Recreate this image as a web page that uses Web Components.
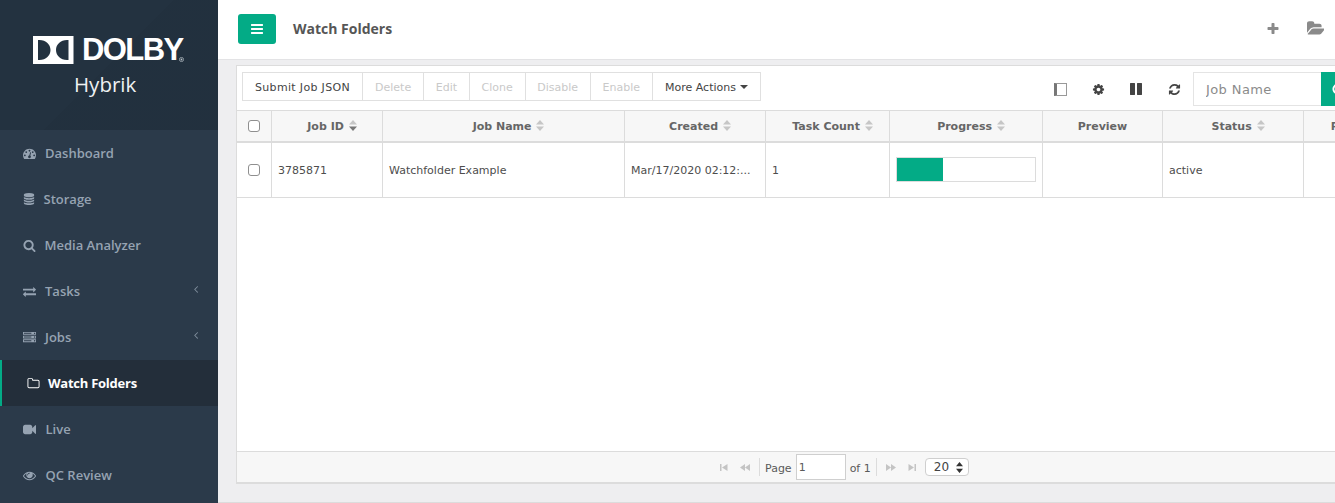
<!DOCTYPE html>
<html lang="en">
<head>
<meta charset="utf-8">
<title>Watch Folders</title>
<style>
html, body { margin: 0; height: 100%; overflow: hidden; background: #fff; }
</style>
</head>
<body>
<hy-app></hy-app>
<script>
'use strict';

(function() {

const GREEN = '#03ab86';

// glyph paths on the usual 1792 grid
const ICONS = {
  dashboard: 'M384 1152q0-53-37.5-90.5t-90.5-37.5-90.5 37.5-37.5 90.5 37.5 90.5 90.5 37.5 90.5-37.5 37.5-90.5zm192-448q0-53-37.5-90.5t-90.5-37.5-90.5 37.5-37.5 90.5 37.5 90.5 90.5 37.5 90.5-37.5 37.5-90.5zm428 481l101-382q6-26-7.5-48.5t-38.5-29.5-48 6.5-30 39.5l-101 382q-60 5-107 43.5t-63 98.5q-20 77 20 146t117 89 146-20 89-117q16-60-6-117t-72-91zm660-33q0-53-37.5-90.5t-90.5-37.5-90.5 37.5-37.5 90.5 37.5 90.5 90.5 37.5 90.5-37.5 37.5-90.5zm-640-640q0-53-37.5-90.5t-90.5-37.5-90.5 37.5-37.5 90.5 37.5 90.5 90.5 37.5 90.5-37.5 37.5-90.5zm448 192q0-53-37.5-90.5t-90.5-37.5-90.5 37.5-37.5 90.5 37.5 90.5 90.5 37.5 90.5-37.5 37.5-90.5zm320 448q0 261-141 483-19 29-54 29h-1402q-35 0-54-29-141-221-141-483 0-182 71-348t191-286 286-191 348-71 348 71 286 191 191 286 71 348z',
  database: 'M896 768q237 0 443-43t325-127v170q0 69-103 128t-280 93.5-385 34.5-385-34.5-280-93.5-103-128v-170q119 84 325 127t443 43zm0 768q237 0 443-43t325-127v170q0 69-103 128t-280 93.5-385 34.5-385-34.5-280-93.5-103-128v-170q119 84 325 127t443 43zm0-384q237 0 443-43t325-127v170q0 69-103 128t-280 93.5-385 34.5-385-34.5-280-93.5-103-128v-170q119 84 325 127t443 43zm0-1152q208 0 385 34.5t280 93.5 103 128v128q0 69-103 128t-280 93.5-385 34.5-385-34.5-280-93.5-103-128v-128q0-69 103-128t280-93.5 385-34.5z',
  search: 'M1216 832q0-185-131.5-316.5t-316.5-131.5-316.5 131.5-131.5 316.5 131.5 316.5 316.5 131.5 316.5-131.5 131.5-316.5zm512 832q0 52-38 90t-90 38q-54 0-90-38l-343-342q-179 124-399 124-143 0-273.5-55.5t-225-150-150-225-55.5-273.5 55.5-273.5 150-225 225-150 273.5-55.5 273.5 55.5 225 150 150 225 55.5 273.5q0 220-124 399l343 343q37 37 37 90z',
  exchange: 'M1792 1184v192q0 13-9.5 22.5t-22.5 9.5h-1376v192q0 13-9.5 22.5t-22.5 9.5q-12 0-24-10l-319-320q-9-9-9-22 0-14 9-23l320-320q9-9 23-9 13 0 22.5 9.5t9.5 22.5v192h1376q13 0 22.5 9.5t9.5 22.5zm0-544q0 14-9 23l-320 320q-9 9-23 9-13 0-22.5-9.5t-9.5-22.5v-192h-1376q-13 0-22.5-9.5t-9.5-22.5v-192q0-13 9.5-22.5t22.5-9.5h1376v-192q0-14 9-23t23-9q12 0 24 10l319 319q9 9 9 23z',
  server: 'M128 1408h1024v-128h-1024v128zm0-512h1024v-128h-1024v128zm1568 448q0-40-28-68t-68-28-68 28-28 68 28 68 68 28 68-28 28-68zm-1568-960h1024v-128h-1024v128zm1568 448q0-40-28-68t-68-28-68 28-28 68 28 68 68 28 68-28 28-68zm0-512q0-40-28-68t-68-28-68 28-28 68 28 68 68 28 68-28 28-68zm96 832v384h-1792v-384h1792zm0-512v384h-1792v-384h1792zm0-512v384h-1792v-384h1792z',
  folder: 'M1600 1312v-704q0-40-28-68t-68-28h-704q-40 0-68-28t-28-68v-64q0-40-28-68t-68-28h-320q-40 0-68 28t-28 68v960q0 40 28 68t68 28h1216q40 0 68-28t28-68zm128-704v704q0 92-66 158t-158 66h-1216q-92 0-158-66t-66-158v-960q0-92 66-158t158-66h320q92 0 158 66t66 158v32h672q92 0 158 66t66 158z',
  video: 'M1792 352v1088q0 42-39 59-13 5-25 5-27 0-45-19l-403-403v166q0 119-84.5 203.5t-203.5 84.5h-704q-119 0-203.5-84.5t-84.5-203.5v-704q0-119 84.5-203.5t203.5-84.5h704q119 0 203.5 84.5t84.5 203.5v165l403-402q18-19 45-19 12 0 25 5 39 17 39 59z',
  eye: 'M1664 960q-152-236-381-353 61 104 61 225 0 185-131.5 316.5t-316.5 131.5-316.5-131.5-131.5-316.5q0-121 61-225-229 117-381 353 133 205 333.5 326.5t434.5 121.5 434.5-121.5 333.5-326.5zm-720-384q0-20-14-34t-34-14q-125 0-214.5 89.5t-89.5 214.5q0 20 14 34t34 14 34-14 14-34q0-86 61-147t147-61q20 0 34-14t14-34zm848 384q0 34-20 69-140 230-376.5 368.5t-499.5 138.5-499.5-139-376.5-368q-20-35-20-69t20-69q140-229 376.5-368t499.5-139 499.5 139 376.5 368q20 35 20 69z',
  angle: 'M1203 544q0 13-10 23l-393 393 393 393q10 10 10 23t-10 23l-50 50q-10 10-23 10t-23-10l-466-466q-10-10-10-23t10-23l466-466q10-10 23-10t23 10l50 50q10 10 10 23z',
  plus: 'M1600 736v192q0 40-28 68t-68 28h-416v416q0 40-28 68t-68 28h-192q-40 0-68-28t-28-68v-416h-416q-40 0-68-28t-28-68v-192q0-40 28-68t68-28h416v-416q0-40 28-68t68-28h192q40 0 68 28t28 68v416h416q40 0 68 28t28 68z',
  open: 'M1879 952q0 31-31 66l-336 396q-43 51-120.5 86.5t-143.5 35.5h-1088q-34 0-60.5-13t-26.5-43q0-31 31-66l336-396q43-51 120.5-86.5t143.5-35.5h1088q34 0 60.5 13t26.5 43zm-343-344v160h-832q-94 0-197 47.5t-164 119.5l-337 396-5 6q0-4-.5-12.5t-.5-12.5v-960q0-92 66-158t158-66h320q92 0 158 66t66 158v32h544q92 0 158 66t66 158z',
  bars: 'M1664 1344v128q0 26-19 45t-45 19h-1408q-26 0-45-19t-19-45v-128q0-26 19-45t45-19h1408q26 0 45 19t19 45zm0-512v128q0 26-19 45t-45 19h-1408q-26 0-45-19t-19-45v-128q0-26 19-45t45-19h1408q26 0 45 19t19 45zm0-512v128q0 26-19 45t-45 19h-1408q-26 0-45-19t-19-45v-128q0-26 19-45t45-19h1408q26 0 45 19t19 45z',
  cog: 'M1152 896q0-106-75-181t-181-75-181 75-75 181 75 181 181 75 181-75 75-181zm512-109v222q0 12-8 23t-20 13l-185 28q-19 54-39 91 35 50 107 138 10 12 10 25t-9 23q-27 37-99 108t-94 71q-12 0-26-9l-138-108q-44 23-91 38-16 136-29 186-7 28-36 28h-222q-14 0-24.5-8.5t-11.5-21.5l-28-184q-49-16-90-37l-141 107q-10 9-25 9-14 0-25-11-126-114-165-168-7-10-7-23 0-12 8-23 15-21 51-66.5t54-70.5q-27-50-41-99l-183-27q-13-2-21-12.5t-8-23.5v-222q0-12 8-23t19-13l186-28q14-46 39-92-40-57-107-138-10-12-10-24 0-10 9-23 26-36 98.5-107.5t94.5-71.5q13 0 26 10l138 107q44-23 91-38 16-136 29-186 7-28 36-28h222q14 0 24.5 8.5t11.5 21.5l28 184q49 16 90 37l142-107q9-9 24-9 13 0 25 10 129 119 165 170 7 8 7 22 0 12-8 23-15 21-51 66.5t-54 70.5q26 50 41 98l183 28q13 2 21 12.5t8 23.5z',
  pause: 'M1664 192v1408q0 26-19 45t-45 19h-512q-26 0-45-19t-19-45v-1408q0-26 19-45t45-19h512q26 0 45 19t19 45zm-896 0v1408q0 26-19 45t-45 19h-512q-26 0-45-19t-19-45v-1408q0-26 19-45t45-19h512q26 0 45 19t19 45z',
  refresh: 'M1639 1056q0 5-1 7-64 268-268 434.5t-478 166.5q-146 0-282.5-55t-243.5-157l-129 129q-19 19-45 19t-45-19-19-45v-448q0-26 19-45t45-19h448q26 0 45 19t19 45-19 45l-137 137q71 66 161 102t187 36q134 0 250-65t186-179q11-17 53-117 8-23 30-23h192q13 0 22.5 9.5t9.5 22.5zm25-800v448q0 26-19 45t-45 19h-448q-26 0-45-19t-19-45 19-45l138-138q-148-137-349-137-134 0-250 65t-186 179q-11 17-53 117-8 23-30 23h-199q-13 0-22.5-9.5t-9.5-22.5v-7q65-268 270-434.5t480-166.5q146 0 284 55.5t245 156.5l130-129q19-19 45-19t45 19 19 45z',
};

function icon(name, size) {
  return `<svg width="${size}" height="${size}" viewBox="0 0 1792 1792" fill="currentColor" aria-hidden="true"><path d="${ICONS[name]}"/></svg>`;
}

class HyApp extends HTMLElement {
  constructor() {
    super();
    const root = this.attachShadow({mode: 'open'});
    root.innerHTML = `
<style>
:host {
  display: grid;
  grid-template-columns: 218px 1fr;
  height: 503px;
  overflow: hidden;
}
#main {
  display: flex;
  flex-direction: column;
  min-width: 0;
  overflow: hidden;
  background: #eeeef0;
}
#content {
  flex: 1;
  min-height: 0;
  padding: 5px 0 18px 18px;
  overflow: hidden;
}
#foot { height: 1px; flex: none; background: #dcdcdc; }
</style>
<hy-sidebar></hy-sidebar>
<div id="main">
  <hy-topbar title="Watch Folders"></hy-topbar>
  <div id="content"><hy-jobs-panel></hy-jobs-panel></div>
  <div id="foot"></div>
</div>
`;
  }
}

class HySidebar extends HTMLElement {
  constructor() {
    super();
    const root = this.attachShadow({mode: 'open'});
    root.innerHTML = `
<style>
:host {
  display: flex;
  flex-direction: column;
  background: #2b3a4a;
  overflow: hidden;
}
#logo {
  height: 130px;
  flex: none;
  position: relative;
  background: #233240;
  box-sizing: border-box;
  padding: 36px 0 0 33px;
}
#shade {
  position: absolute;
  inset: 0;
  background: linear-gradient(135deg, transparent 49.8%, #202e3b 50%);
  opacity: 0.4;
}
#mark {
  position: relative;
  display: flex;
  align-items: flex-start;
  height: 29px;
}
#mark svg { flex: none; }
#word {
  margin-left: 8px;
  font: 700 31px/28px "Liberation Sans", sans-serif;
  letter-spacing: -1.6px;
  color: #fff;
}
#reg { margin: 21px 0 0 -4px; }
#name {
  position: relative;
  margin: 5px 0 0 41px;
  font: 400 20.5px/28px "Open Sans", sans-serif;
  color: #eef1f3;
}
</style>
<div id="logo">
  <div id="shade"></div>
  <div id="mark">
    <svg width="41" height="28" viewBox="0 0 41 28"><path fill="#fff" fill-rule="evenodd" d="M0 0h40.500v28H0zM5 4v20h1.500c6.500 0 11-4.500 11-10S13 4 6.500 4zM35.500 4H34c-6.500 0-11 4.500-11 10s4.500 10 11 10h1.500z"/></svg>
    <span id="word">DOLBY</span>
    <svg id="reg" width="5" height="5" viewBox="0 0 5 5" aria-hidden="true"><circle cx="2.500" cy="2.500" r="2.100" fill="none" stroke="#b9c1c8" stroke-width=".7"/><circle cx="2.500" cy="2.500" r=".9" fill="#b9c1c8"/></svg>
  </div>
  <div id="name">Hybrik</div>
</div>
<hy-nav-item icon="dashboard" size="13" gap="9">Dashboard</hy-nav-item>
<hy-nav-item icon="database" size="12" gap="8.500">Storage</hy-nav-item>
<hy-nav-item icon="search" size="13" gap="8.500">Media Analyzer</hy-nav-item>
<hy-nav-item icon="exchange" size="13" gap="9" sub>Tasks</hy-nav-item>
<hy-nav-item icon="server" size="13" gap="9" sub>Jobs</hy-nav-item>
<hy-nav-item icon="folder" size="13" gap="8" active>Watch Folders</hy-nav-item>
<hy-nav-item icon="video" size="13" gap="9.500">Live</hy-nav-item>
<hy-nav-item icon="eye" size="13" gap="9.500">QC Review</hy-nav-item>
`;
  }
}

class HyNavItem extends HTMLElement {
  constructor() {
    super();
    const root = this.attachShadow({mode: 'open'});
    const name = this.getAttribute('icon');
    const size = this.getAttribute('size');
    const gap = this.getAttribute('gap');
    root.innerHTML = `
<style>
:host {
  display: flex;
  align-items: center;
  flex: none;
  height: 46px;
  box-sizing: border-box;
  padding: 0 16px 0 23px;
  color: #96a3b2;
  font: 600 13px/18px "Open Sans", sans-serif;
}
:host([active]) {
  background: #232e3a;
  color: #fff;
  font-weight: 700;
  letter-spacing: -0.25px;
  border-left: 2px solid ${GREEN};
  padding-left: 25px;
}
svg { flex: none; }
#label { margin-left: ${gap}px; }
#more { margin-left: auto; margin-top: -5px; color: #7f8d9c; display: flex; }
</style>
${icon(name, size)}
<span id="label"><slot></slot></span>
${this.hasAttribute('sub') ? `<span id="more">${icon('angle', 12)}</span>` : ''}
`;
  }
}

class HyTopbar extends HTMLElement {
  constructor() {
    super();
    const root = this.attachShadow({mode: 'open'});
    root.innerHTML = `
<style>
:host {
  display: flex;
  align-items: center;
  flex: none;
  height: 60px;
  box-sizing: border-box;
  padding: 0 11px 2px 20px;
  background: #fff;
  border-bottom: 1px solid #e3e3e5;
}
button {
  width: 38px;
  height: 30px;
  padding: 0;
  border: 0;
  border-radius: 3px;
  background: ${GREEN};
  color: #fff;
  display: flex;
  align-items: center;
  justify-content: center;
}
h1 {
  margin: 0 0 0 17px;
  font: 700 14px/20px "Open Sans", sans-serif;
  color: #565656;
}
#tools {
  margin-left: auto;
  display: flex;
  align-items: center;
  gap: 27px;
  color: #8a8a8a;
}
#tools svg { display: block; }
</style>
<button type="button" aria-label="Menu">${icon('bars', 14)}</button>
<h1>${this.getAttribute('title')}</h1>
<div id="tools">${icon('plus', 14)}${icon('open', 17)}</div>
`;
  }
}

class HyJobsPanel extends HTMLElement {
  constructor() {
    super();
    const root = this.attachShadow({mode: 'open'});
    root.innerHTML = `
<style>
:host {
  display: flex;
  flex-direction: column;
  width: 1166px;
  height: 100%;
  box-sizing: border-box;
  background: #fff;
  border: 1px solid #dcdcdc;
  border-right: 0;
  border-bottom: 0;
}
hy-jobs-table { flex: 1; min-height: 0; }
</style>
<hy-job-toolbar></hy-job-toolbar>
<hy-jobs-table></hy-jobs-table>
<hy-pager></hy-pager>
`;
  }
}

class HyJobToolbar extends HTMLElement {
  constructor() {
    super();
    const root = this.attachShadow({mode: 'open'});
    const buttons = [
      ['Submit Job JSON', '', 'letter-spacing:.33px'], ['Delete', 'off', ''],
      ['Edit', 'off', 'padding:3px 11.5px 0'], ['Clone', 'off', ''],
      ['Disable', 'off', 'padding:3px 11.5px 0'], ['Enable', 'off', ''],
    ].map(([t, cls, css]) => `<button type="button" class="${cls}" style="${css}">${t}</button>`).join('');
    root.innerHTML = `
<style>
:host {
  display: flex;
  align-items: flex-start;
  flex: none;
  width: 1118px;
  height: 44px;
  box-sizing: border-box;
  padding: 6px 0 0 5px;
  font: 400 11px/16px "DejaVu Sans", Verdana, sans-serif;
  color: #444;
}
#group { display: flex; height: 29px; }
button {
  font: inherit;
  color: inherit;
  background: #fff;
  border: 1px solid #e0e0e0;
  border-left: 0;
  padding: 3px 12px 0;
  white-space: nowrap;
}
button:first-child { border-left: 1px solid #e0e0e0; }
button.off { color: #c9c9c9; }
.caret {
  display: inline-block;
  border: 4px solid transparent;
  border-top-color: #444;
  border-bottom: 0;
  vertical-align: 2px;
  margin-left: 1px;
}
#tools {
  margin-left: auto;
  display: flex;
  align-items: center;
  height: 34px;
  color: #444;
}
#tools span { display: flex; width: 38px; justify-content: center; }
#col {
  width: 9px;
  height: 11px;
  border: 1px solid #999;
  border-left: 3px solid #777;
  background: #fff;
}
#find { display: flex; }
input {
  width: 128px;
  height: 34px;
  box-sizing: border-box;
  border: 1px solid #e4e4e4;
  border-right: 0;
  padding: 0 12px;
  font: 400 13px "DejaVu Sans", Verdana, sans-serif;
  letter-spacing: .4px;
  color: #444;
  outline: 0;
}
input::placeholder { color: #8b8b8b; opacity: 1; }
#go {
  width: 34px;
  height: 34px;
  padding: 0;
  border: 0;
  background: ${GREEN};
  color: #fff;
  display: flex;
  align-items: center;
  justify-content: center;
}
</style>
<div id="group">${buttons}<button type="button">More Actions <i class="caret"></i></button></div>
<div id="tools">
  <span><i id="col"></i></span>
  <span>${icon('cog', 13)}</span>
  <span>${icon('pause', 14)}</span>
  <span>${icon('refresh', 13)}</span>
  <div id="find">
    <input type="text" placeholder="Job Name" aria-label="Job Name">
    <button id="go" type="button" aria-label="Search">${icon('search', 13)}</button>
  </div>
</div>
`;
  }
}

class HyJobsTable extends HTMLElement {
  constructor() {
    super();
    const root = this.attachShadow({mode: 'open'});
    const cols = [
      ['Job ID', 111, 'down'], ['Job Name', 242, 1], ['Created', 141, 1],
      ['Task Count', 124, 1], ['Progress', 153, 1], ['Preview', 120, 0],
      ['Status', 141, 1], ['Retries', 98, 0],
    ];
    const sorter = kind => !kind ? '' : `<svg class="sort" width="8" height="11" viewBox="0 0 8 11"><path fill="#c6c6c6" d="M4 0l4 4.500H0z"/><path fill="${kind === 'down' ? '#777' : '#c6c6c6'}" d="M4 11l4-4.500H0z"/></svg>`;
    root.innerHTML = `
<style>
:host {
  display: block;
  overflow: hidden;
  font: 400 11px/16px "DejaVu Sans", Verdana, sans-serif;
  color: #4d4d4d;
}
table {
  table-layout: fixed;
  border-collapse: separate;
  border-spacing: 0;
  width: 1165px;
}
th {
  height: 29px;
  padding: 1px 0 0;
  background: #f7f7f7;
  border-top: 1px solid #dcdcdc;
  border-bottom: 2px solid #dcdcdc;
  border-right: 1px solid #dcdcdc;
  color: #666;
  font-weight: 700;
  white-space: nowrap;
  overflow: hidden;
}
th.sorts { padding-left: 10px; }
.sort { vertical-align: -1px; margin-left: 1px; }
td {
  height: 52px;
  padding: 2px 6px 0;
  border-bottom: 1px solid #dcdcdc;
  border-right: 1px solid #dcdcdc;
  white-space: nowrap;
  overflow: hidden;
}
th:last-child, td:last-child { border-right: 0; }
.tick { padding: 0; text-align: center; }
td.tick { height: 54px; }
input {
  appearance: none;
  display: block;
  margin: 0 auto;
  width: 12px;
  height: 12px;
  border: 1px solid #8f8f8f;
  border-radius: 3px;
  background: #fff;
}
#bar {
  height: 23px;
  margin-top: -4px;
  border: 1px solid #dcdcdc;
  display: flex;
}
#bar i { display: block; width: 33%; background: ${GREEN}; }
</style>
<table>
  <colgroup><col style="width:35px">${cols.map(c => `<col style="width:${c[1]}px">`).join('')}</colgroup>
  <thead>
    <tr>
      <th class="tick"><input type="checkbox" aria-label="Select all"></th>
      ${cols.map(c => `<th class="${c[2] ? 'sorts' : ''}">${c[0]} ${sorter(c[2])}</th>`).join('')}
    </tr>
  </thead>
  <tbody>
    <tr>
      <td class="tick"><input type="checkbox" aria-label="Select row"></td>
      <td>3785871</td>
      <td>Watchfolder Example</td>
      <td>Mar/17/2020 02:12:...</td>
      <td>1</td>
      <td><div id="bar"><i></i></div></td>
      <td></td>
      <td>active</td>
      <td></td>
    </tr>
  </tbody>
</table>
`;
  }
}

class HyPager extends HTMLElement {
  constructor() {
    super();
    const root = this.attachShadow({mode: 'open'});
    const nav = d => `<svg width="10" height="7" viewBox="0 0 10 7" fill="#c4c4c4"><path d="${d}"/></svg>`;
    root.innerHTML = `
<style>
:host {
  display: flex;
  align-items: center;
  flex: none;
  height: 33px;
  box-sizing: border-box;
  padding: 0 0 0 483px;
  background: #f7f7f7;
  border-top: 1px solid #dcdcdc;
  border-bottom: 2px solid #dcdcdc;
  font: 400 11px/16px "DejaVu Sans", Verdana, sans-serif;
  color: #5a5a5a;
}
.nav { display: flex; gap: 10px; }
.nav svg { display: block; }
.sep { width: 1px; height: 18px; background: #dcdcdc; margin: 0 5px 0 9px; }
span.txt { padding-top: 4px; }
input {
  width: 50px;
  height: 26px;
  box-sizing: border-box;
  margin: 0 4px;
  padding: 0 2px;
  border: 1px solid #cfcfcf;
  background: #fff;
  font: inherit;
  color: inherit;
  outline: 0;
}
#size {
  width: 44px;
  height: 18px;
  box-sizing: border-box;
  margin-left: 9px;
  padding: 0 5px 0 8px;
  border: 1px solid #cfcfcf;
  border-radius: 4px;
  background: #fff;
  display: flex;
  align-items: center;
  justify-content: space-between;
  color: #444;
  font-size: 12px;
}
</style>
<div class="nav">${nav('M0 0h1.500v7H0zM2 3.500L7.500 0v7z')}${nav('M0 3.500L5 0v7zM5 3.500L10 0v7z')}</div>
<i class="sep"></i>
<span class="txt">Page</span><input type="text" value="1" aria-label="Page"><span class="txt">of 1</span>
<i class="sep" style="margin:0 9px 0 5px"></i>
<div class="nav">${nav('M0 0l5 3.500L0 7zM5 0l5 3.500L5 7z')}${nav('M2.500 0L8 3.500 2.500 7zM8.500 0H10v7H8.500z')}</div>
<div id="size"><span>20</span><svg width="7" height="11" viewBox="0 0 7 11" fill="#333"><path d="M3.500 0L7 4.300H0zM3.500 11L0 6.700h7z"/></svg></div>
`;
  }
}

customElements.define('hy-app', HyApp);
customElements.define('hy-sidebar', HySidebar);
customElements.define('hy-nav-item', HyNavItem);
customElements.define('hy-topbar', HyTopbar);
customElements.define('hy-jobs-panel', HyJobsPanel);
customElements.define('hy-job-toolbar', HyJobToolbar);
customElements.define('hy-jobs-table', HyJobsTable);
customElements.define('hy-pager', HyPager);

}());
</script>
</body>
</html>
